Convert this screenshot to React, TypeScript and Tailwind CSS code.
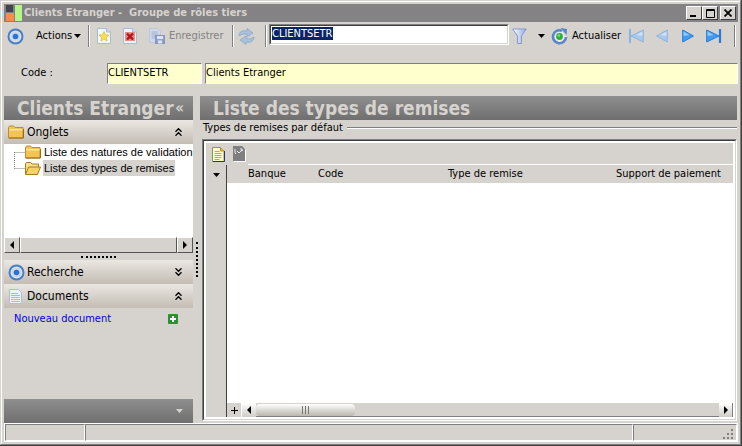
import React, { useEffect, useRef } from "react";

const columns = [
  { label: "Banque", className: "w-[84px] pl-[21px]" },
  { label: "Code", className: "w-[130px] pl-[7px]" },
  { label: "Type de remise", className: "w-[168px] pl-[7px]" },
  { label: "Support de paiement", className: "pl-[7px]" },
];

function Target() {
  return (
    <svg width="17" height="17" viewBox="0 0 17 17" className="shrink-0">
      <circle cx="8.5" cy="8.5" r="7" fill="#d5e1f0" stroke="#4a7fc4" strokeWidth="2" />
      <circle cx="8.5" cy="8.5" r="4.6" fill="#c6d8ee" />
      <circle cx="8.5" cy="8.5" r="2.8" fill="#2f74cc" />
    </svg>
  );
}

function Caret({ color = "#000" }: { color?: string }) {
  return (
    <svg width="7" height="4" viewBox="0 0 7 4" className="shrink-0">
      <path d="M0 0h7L3.500 4z" fill={color} />
    </svg>
  );
}

function Separator() {
  return <span className="h-[22px] w-[2px] shrink-0 border-l border-r border-l-[#7f7f7f] border-r-white" />;
}

function PageStar() {
  return (
    <svg width="14" height="16" viewBox="0 0 14 16">
      <path d="M.5.5h9l4 3.500v11.500H.5z" fill="#f1f6fd" stroke="#a9bbd6" />
      <path d="M9.500.5v3.500h4" fill="#c9daf0" stroke="#a9bbd6" />
      <path d="M7 3.500l1.500 3.200 3.500.4-2.600 2.400.7 3.500L7 11.300 3.900 13l.7-3.500L2 7.100l3.500-.4z" fill="#f7e04e" stroke="#d3b437" strokeWidth=".6" />
    </svg>
  );
}

function PageDelete() {
  return (
    <svg width="14" height="16" viewBox="0 0 14 16">
      <path d="M.5.5h9l4 3.500v11.500H.5z" fill="#eef3fb" stroke="#a9bbd6" />
      <path d="M9.500.5v3.500h4" fill="#c9daf0" stroke="#a9bbd6" />
      <rect x="2" y="4" width="10" height="9" fill="#e58f86" />
      <path d="M4 5.500l6 6M10 5.500l-6 6" stroke="#b5121a" strokeWidth="2.400" />
    </svg>
  );
}

function PageSave() {
  return (
    <svg width="16" height="16" viewBox="0 0 16 16">
      <path d="M.5.5h8l3 3v11H.5z" fill="#cfd8ea" stroke="#bcc7dc" />
      <path d="M2.500 4h6M2.500 6h7M2.500 8h5M2.500 10h4" stroke="#9fb0cf" />
      <rect x="6.500" y="7.500" width="9" height="8" fill="#8d9fca" stroke="#8494c0" />
      <rect x="8" y="8" width="6" height="3" fill="#dfe5f2" />
      <rect x="9" y="12.500" width="4" height="3" fill="#dfe5f2" />
    </svg>
  );
}

function Sync() {
  return (
    <svg width="17" height="17" viewBox="0 0 17 17">
      <path d="M1 8C1 4 4 2 9 3V.5L15 5 9 9V6.500C6 5.500 4 6 1 8z" fill="#a9c0dc" stroke="#8ea6c8" strokeWidth=".8" />
      <path d="M16 9c0 4-3 6-8 5v2.500L2 12l6-4v2.500c3 1 5 .5 8-1.500z" fill="#a3c4dc" stroke="#8ea6c8" strokeWidth=".8" />
    </svg>
  );
}

function Funnel() {
  return (
    <svg width="15" height="17" viewBox="0 0 15 17">
      <defs>
        <linearGradient id="funnel" x1="0" x2="1">
          <stop offset="0" stopColor="#fff" />
          <stop offset="1" stopColor="#8fa9e6" />
        </linearGradient>
      </defs>
      <path d="M.7 1h13.600L9.500 8v7.500h-4V8z" fill="url(#funnel)" stroke="#8499d0" strokeLinejoin="round" />
    </svg>
  );
}

function Reload() {
  return (
    <svg width="17" height="17" viewBox="0 0 17 17">
      <path d="M11 2.800A6.500 6.500 0 1 0 15 9" fill="#e3eaf4" stroke="#5a85c6" strokeWidth="2.600" />
      <path d="M9.500 0l6.500 1-.5 6z" fill="#5a85c6" />
      <circle cx="8.500" cy="8.500" r="3.400" fill="#2fae35" />
      <circle cx="7.800" cy="7.600" r="1.300" fill="#7fdc7c" />
    </svg>
  );
}

function Arrow({ back, bar, muted }: { back?: boolean; bar?: boolean; muted?: boolean }) {
  const fill = muted ? "#a6c9ee" : "#3d9df5";
  const stroke = muted ? "#8fb3dc" : "#2a7ad4";
  return (
    <svg width={bar ? 16 : 12} height="14" viewBox={bar ? "0 0 16 14" : "0 0 12 14"} className={back ? "-scale-x-100" : ""}>
      <path d={bar ? "M.7 1l12.300 6L.7 13z" : "M.7 1l10.800 6L.7 13z"} fill={fill} stroke={stroke} strokeLinejoin="round" />
      <path d="M1.500 2.500l6 3.500-6 1z" fill="#fff" opacity=".45" />
      {bar && <path d="M14 0v14" stroke={stroke} strokeWidth="2.200" />}
    </svg>
  );
}

function Folder() {
  return (
    <svg width="16" height="14" viewBox="0 0 16 14" className="shrink-0">
      <path d="M.5 2.500l1-1.500h4l1.500 1.500h8v10.500H.5z" fill="#f3c354" stroke="#b98c35" />
      <path d="M1.500 5.500V4h13v1.500z" fill="#fde7a4" />
      <path d="M15.500 4v9H1" fill="none" stroke="#9a6c14" />
    </svg>
  );
}

function FolderOpen() {
  return (
    <svg width="16" height="13" viewBox="0 0 16 13" className="shrink-0">
      <path d="M.5 12V1.500l1-1h4L7 2h6.500v3" fill="#fbe08c" stroke="#a97a1c" />
      <path d="M.5 12.500L3.500 5H15.500l-3 7.500z" fill="#f9d264" stroke="#a97a1c" />
    </svg>
  );
}

function DocumentIcon() {
  return (
    <svg width="13" height="15" viewBox="0 0 13 15" className="shrink-0">
      <path d="M.5.5h9l3 3v11H.5z" fill="#eaf2fd" stroke="#a9c0e4" />
      <path d="M2 4.500h7M2 6.500h9M2 8.500h9M2 10.500h9M2 12.500h9" stroke="#9bbdec" />
    </svg>
  );
}

function NoteIcon() {
  return (
    <svg width="13" height="15" viewBox="0 0 13 15">
      <path d="M.5.5h8l3.500 3.500v10.500H.5z" fill="#fffbd0" stroke="#8d8d78" />
      <path d="M12.500 4v10.500H1" fill="none" stroke="#303070" />
      <path d="M8.500.5v3.500H12" fill="#f0b63a" stroke="#c28a20" />
      <path d="M2.500 4.500h5M2.500 6.500h7M2.500 8.500h7M2.500 10.500h7M2.500 12.500h5" stroke="#c4a94a" />
    </svg>
  );
}

function NoteDisabled() {
  return (
    <svg width="13" height="16" viewBox="0 0 13 16">
      <path d="M1 1h9l3 3v12H1z" fill="#fff" />
      <path d="M0 0h9l3 3v12H0z" fill="#7f7f7f" />
      <path d="M2 3v4l1 1M4 5l2 2 2-2 2-1M8 2v2h2" fill="none" stroke="#eee" />
    </svg>
  );
}

function Chevrons({ down }: { down?: boolean }) {
  return (
    <svg width="7" height="8" viewBox="0 0 7 8" className={down ? "rotate-180" : ""}>
      <path d="M.5 3.700l3-3 3 3M.5 7.700l3-3 3 3" fill="none" stroke="#000" strokeWidth="1.300" />
    </svg>
  );
}

function SideHeading({ icon, label, down }: { icon: React.ReactNode; label: string; down?: boolean }) {
  return (
    <button className="flex h-6 w-full shrink-0 items-center bg-linear-to-b from-[#ebe7e2] to-[#c3bdb4] pl-1 pr-[11px] text-[12px]">
      <span className="flex w-[19px] items-center">{icon}</span>
      <span className="flex-1 text-left">{label}</span>
      <Chevrons down={down} />
    </button>
  );
}

function ScrollArrow({ right }: { right?: boolean }) {
  return (
    <svg width="4" height="8" viewBox="0 0 4 8" className={right ? "-scale-x-100" : ""}>
      <path d="M4 0v8L0 4z" />
    </svg>
  );
}

function TreeRow({ label, selected }: { label: string; selected?: boolean }) {
  return (
    <li className="flex h-4 items-center pl-[10px]">
      <svg width="11" height="16" viewBox="0 0 11 16" className="shrink-0">
        <path d={selected ? "M.5 0v8.500M.5 8.500H11" : "M.5 8v8M.5 8.500H11"} fill="none" stroke="#808080" strokeDasharray="1 1" />
      </svg>
      {selected ? <FolderOpen /> : <Folder />}
      <a href="#" className={`ml-[2px] h-4 px-px leading-4 whitespace-nowrap ${selected ? "bg-[#d6d3ce]" : ""}`}>
        {label}
      </a>
    </li>
  );
}

function Sidebar() {
  const raised = "flex w-4 shrink-0 items-center justify-center border border-t-white border-l-white border-r-[#555] border-b-[#555] bg-[#d6d3ce]";
  return (
    <aside className="flex w-[189px] shrink-0 flex-col">
      <div className="flex h-6 shrink-0 items-center justify-between bg-linear-to-b from-[#8f8f8f] to-[#6f6f6f] pr-[9px] pl-[13px] text-[19px] leading-6 font-bold whitespace-nowrap text-[#d6d3ce]">
        <h2>Clients Etranger</h2>
        <button aria-label="Réduire" className="text-[15px]">«</button>
      </div>
      <SideHeading icon={<Folder />} label="Onglets" />
      <ul className="h-[93px] overflow-hidden bg-white font-['Liberation_Sans',sans-serif]">
        <TreeRow label="Liste des natures de validation" />
        <TreeRow label="Liste des types de remises" selected />
      </ul>
      <div className="flex h-4 shrink-0 bg-[#e9e7e3]">
        <button aria-label="Gauche" className={raised}><ScrollArrow /></button>
        <div className="flex-1 border border-t-white border-l-white border-r-[#555] border-b-[#555] bg-[#d6d3ce]" />
        <button aria-label="Droite" className={raised}><ScrollArrow right /></button>
      </div>
      <div className="flex h-[7px] shrink-0 items-center justify-center">
        <span className="w-[35px] border-t-2 border-dotted border-black" />
      </div>
      <SideHeading icon={<Target />} label="Recherche" down />
      <SideHeading icon={<span className="pl-px"><DocumentIcon /></span>} label="Documents" />
      <div className="flex flex-1 items-start justify-between py-1 pr-[15px] pl-[10px]">
        <a href="#" className="leading-[14px] text-[#0000e0]">Nouveau document</a>
        <button aria-label="Ajouter" className="pt-[2px]">
          <svg width="10" height="10" viewBox="0 0 10 10">
            <rect width="10" height="10" rx="1" fill="#2f8f2f" />
            <path d="M5 2v6M2 5h6" stroke="#fff" strokeWidth="2" />
          </svg>
        </button>
      </div>
      <div className="flex h-6 shrink-0 items-center justify-end bg-linear-to-b from-[#8f8f8f] to-[#6f6f6f] pr-[10px]">
        <button aria-label="Plus"><Caret color="#d6d3ce" /></button>
      </div>
    </aside>
  );
}

function Grid() {
  return (
    <div className="mt-1 ml-[2px] flex flex-1 flex-col border border-t-[#7f7f7f] border-l-[#7f7f7f] border-r-white border-b-white">
      <div className="flex flex-1 flex-col border border-t-[#404040] border-l-[#404040] border-r-[#d6d3ce] border-b-[#d6d3ce]">
        <div className="flex flex-1 flex-col border-2 border-white">
          <div className="flex h-[22px] shrink-0">
            <div className="flex w-[42px] items-center gap-2 pl-[6px]">
              <button aria-label="Nouveau"><NoteIcon /></button>
              <button aria-label="Supprimer" disabled><NoteDisabled /></button>
            </div>
            <div className="flex-1 border-b border-white" />
          </div>
          <div className="flex flex-1">
            <div className="flex w-[21px] shrink-0 items-start justify-center border-r border-[#404040] pt-2">
              <Caret />
            </div>
            <div className="flex min-w-0 flex-1 flex-col bg-white">
              <table className="w-full table-fixed">
                <thead>
                  <tr className="h-[18px] bg-[#d6d3ce]">
                    {columns.map((c) => (
                      <th key={c.label} className={`text-left font-normal leading-[14px] whitespace-nowrap ${c.className}`}>
                        {c.label}
                      </th>
                    ))}
                  </tr>
                </thead>
              </table>
              <div className="mt-auto flex h-[14px] items-stretch bg-[#d6d3ce]">
                <button aria-label="Ajouter une ligne" className="flex w-[15px] items-center justify-center border-r border-white">
                  <svg width="7" height="7" viewBox="0 0 7 7">
                    <path d="M3.500 0v7M0 3.500h7" stroke="#000" />
                  </svg>
                </button>
                <button aria-label="Gauche" className="flex w-[14px] items-center justify-center bg-linear-to-b from-white to-[#d0ccc6]"><ScrollArrow /></button>
                <div className="flex flex-1 border-b border-[#7f7f7f] pt-px">
                  <div className="flex w-[99px] items-center justify-center gap-[2px] rounded-sm bg-linear-to-b from-white to-[#bab6ae]">
                    <span className="h-2 w-px bg-[#777]" />
                    <span className="h-2 w-px bg-[#777]" />
                    <span className="h-2 w-px bg-[#777]" />
                  </div>
                </div>
                <button aria-label="Droite" className="flex w-[14px] items-center justify-center border-r border-[#7f7f7f] bg-linear-to-b from-white to-[#d0ccc6]"><ScrollArrow right /></button>
              </div>
            </div>
          </div>
        </div>
      </div>
    </div>
  );
}

export default function App() {
  const search = useRef<HTMLInputElement>(null);

  useEffect(() => {
    search.current?.focus();
    search.current?.select();
  }, []);

  const caption = "flex h-[14px] w-4 items-center justify-center border border-t-white border-l-white border-r-[#404040] border-b-[#404040] bg-[#d6d3ce]";

  return (
    <div className="flex min-h-screen flex-col border-r border-b border-[#404040] bg-[#d6d3ce] font-[Tahoma,'DejaVu_Sans_Condensed','DejaVu_Sans',sans-serif] text-[11px] text-black">
      <div className="flex flex-1 flex-col border border-t-[#d6d3ce] border-l-[#d6d3ce] border-r-[#7f7f7f] border-b-[#7f7f7f]">
        <div className="flex flex-1 flex-col border-t border-l border-white p-[2px]">
          <header className="flex h-[18px] shrink-0 items-center bg-[#848284] px-[2px] text-[#d6d3ce]">
            <svg width="16" height="16" viewBox="0 0 16 16" className="shrink-0">
              <path d="M0 0h7v7H0z" fill="#444" />
              <path d="M0 8h8v8H0z" fill="#ff8a50" />
              <path d="M9 0h7v16H9z" fill="#b5f58a" />
            </svg>
            <h1 className="ml-[2px] flex-1 pt-px text-[11px] font-bold whitespace-pre">Clients Etranger -  Groupe de rôles tiers</h1>
            <button aria-label="Minimiser" className={caption}>
              <svg width="8" height="8"><path d="M0 6h6v2H0z" /></svg>
            </button>
            <button aria-label="Agrandir" className={caption}>
              <svg width="9" height="9"><path d="M.5.5h8v8h-8zM0 1.500h9" fill="none" stroke="#000" /></svg>
            </button>
            <button aria-label="Fermer" className={`ml-[2px] ${caption}`}>
              <svg width="8" height="8"><path d="M.5.5l7 7M7.500.5l-7 7" stroke="#000" strokeWidth="1.700" /></svg>
            </button>
          </header>

          <div className="flex h-[28px] shrink-0 items-center pr-[2px] pl-[3px]">
            <Target />
            <button className="ml-3 flex w-[52px] items-center justify-between pr-[7px] leading-[14px]">
              Actions <Caret />
            </button>
            <Separator />
            <button aria-label="Nouveau" className="ml-[7px]"><PageStar /></button>
            <button aria-label="Supprimer" className="ml-3"><PageDelete /></button>
            <button disabled className="ml-3 flex w-[83px] items-center gap-1 text-[#848284]">
              <PageSave /> Enregistrer
            </button>
            <Separator />
            <button aria-label="Synchroniser" disabled className="mr-[10px] ml-1"><Sync /></button>
            <Separator />
            <div className="mt-[2px] ml-[2px] min-w-0 flex-1 self-start border border-t-[#7f7f7f] border-l-[#7f7f7f] border-r-white border-b-white">
              <input
                ref={search}
                aria-label="Recherche"
                defaultValue="CLIENTSETR"
                className="block h-[19px] w-full border border-t-[#404040] border-l-[#404040] border-r-[#d6d3ce] border-b-[#d6d3ce] bg-white px-px pb-[2px] leading-[14px] outline-none selection:bg-[#0a246a] selection:text-white"
              />
            </div>
            <button aria-label="Filtrer" className="ml-[3px]"><Funnel /></button>
            <button aria-label="Options de filtre" className="ml-[11px]"><Caret /></button>
            <button className="ml-[6px] flex w-[77px] items-center gap-1"><Reload /> Actualiser</button>
            <button aria-label="Premier" className="mr-3"><Arrow back bar muted /></button>
            <button aria-label="Précédent" className="mr-[14px]"><Arrow back muted /></button>
            <button aria-label="Suivant" className="mr-3"><Arrow /></button>
            <button aria-label="Dernier" className="mr-3"><Arrow bar /></button>
            <Separator />
          </div>

          <div className="flex shrink-0 items-center gap-[3px] pt-[13px] pb-3">
            <label htmlFor="code" className="w-[100px] pl-[17px]">Code :</label>
            <input id="code" defaultValue="CLIENTSETR" className="h-[21px] w-[95px] border border-t-[#7f7f7f] border-l-[#7f7f7f] border-r-white border-b-white bg-[#ffffce] pb-[2px]" />
            <input aria-label="Libellé" defaultValue="Clients Etranger" className="h-[21px] min-w-0 flex-1 border border-t-[#7f7f7f] border-l-[#7f7f7f] border-r-white border-b-white bg-[#ffffce] pb-[2px]" />
          </div>

          <div className="flex flex-1">
            <Sidebar />
            <div className="flex w-[7px] shrink-0 justify-center pt-[146px]">
              <span className="h-[35px] border-l-2 border-dotted border-black" />
            </div>
            <main className="flex min-w-0 flex-1 flex-col pr-px pb-[2px]">
              <h2 className="flex h-6 shrink-0 items-center bg-linear-to-b from-[#8f8f8f] to-[#6f6f6f] pl-[13px] text-[19px] leading-6 font-bold text-[#d6d3ce]">
                Liste des types de remises
              </h2>
              <div className="flex h-[15px] shrink-0 items-center gap-1 pl-[3px]">
                <h3 className="leading-[14px]">Types de remises par défaut</h3>
                <span className="h-[2px] flex-1 border-t border-b border-t-[#7f7f7f] border-b-white" />
              </div>
              <Grid />
            </main>
          </div>

          <footer className="flex h-[19px] shrink-0 border border-white">
            <div className="w-20 border border-t-[#7f7f7f] border-l-[#7f7f7f] border-r-white border-b-white" />
            <div className="flex-1 border border-t-[#7f7f7f] border-l-[#7f7f7f] border-r-white border-b-white" />
            <div className="flex w-[104px] items-end justify-end border border-t-[#7f7f7f] border-l-[#7f7f7f] border-r-white border-b-white pr-[3px] pb-px">
              <svg width="11" height="11" viewBox="0 0 11 11">
                <path d="M9 1h2v2H9zM9 5h2v2H9zM9 9h2v2H9zM5 5h2v2H5zM5 9h2v2H5zM1 9h2v2H1z" fill="#7f7f7f" />
              </svg>
            </div>
          </footer>
        </div>
      </div>
    </div>
  );
}
